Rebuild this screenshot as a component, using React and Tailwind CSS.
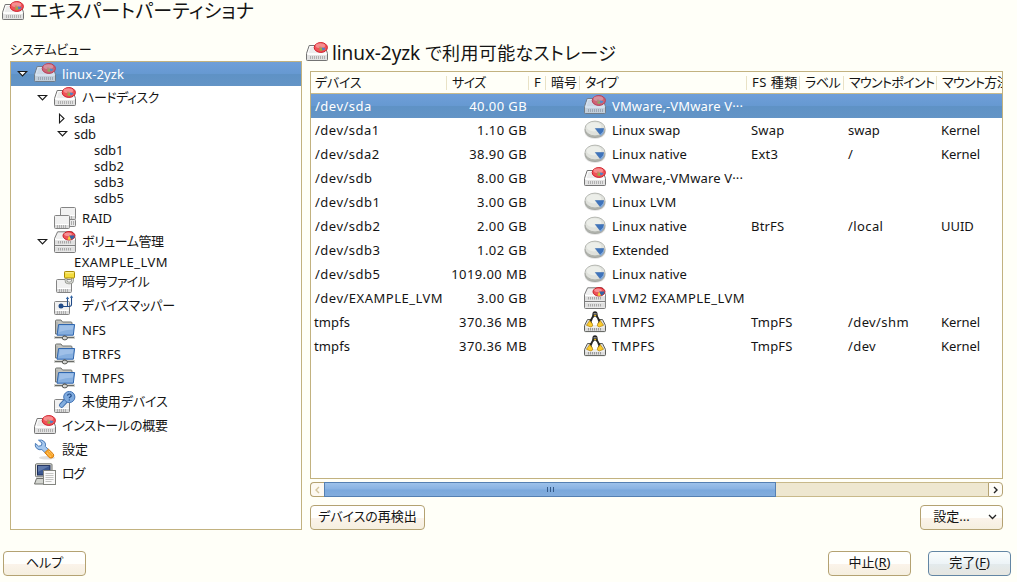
import clsx from "clsx";

/* ---------- icons (22 x 22) ---------- */

function Svg({ children, className }) {
  return (
    <svg width="22" height="22" viewBox="0 0 22 22" className={clsx("shrink-0", className)}>
      {children}
    </svg>
  );
}

function DiskIcon({ className }) {
  return (
    <Svg className={className}>
      <path d="M3.2 3.500h15.600l2.700 8v6.200q0 .8-.8.8H1.300q-.8 0-.8-.8v-6.200z" fill="#f4f4f4" stroke="#747474" />
      <path d="M4.200 4.500h13.600l2.200 7H2z" fill="#ececec" stroke="#fff" strokeWidth=".8" />
      <path d="M1 12.500h20V18H1z" fill="#e2e2e2" />
      <path d="M1.500 12.500h19" stroke="#fdfdfd" />
      <path d="M4.500 14v3M6.500 14v3M8.500 14v3M10.500 14v3M12.500 14v3M14.500 14v3M16.500 14v3M18.500 14v3" stroke="#b0b0b0" />
      <ellipse cx="14.800" cy="5.500" rx="6.600" ry="4.900" fill="#ef5358" stroke="#d01c28" />
      <ellipse cx="14.300" cy="3.700" rx="4.800" ry="2.400" fill="#f9a0a2" opacity=".75" />
      <path d="M15.500 5.200l4 1q-.6 2-3 2.400z" fill="#4f83c4" />
      <path d="M15.500 5.200l.8 3.500q-2 .2-3.300-.8z" fill="#8fb83c" />
      <path d="M12.800 4.600h2.400v1.800h-2.400z" fill="#c78a6a" />
    </Svg>
  );
}

function PartitionIcon() {
  return (
    <Svg>
      <ellipse cx="11" cy="13" rx="10.500" ry="7" fill="#000" opacity=".1" />
      <path d="M1 10v2q1.500 6.500 10 6.500T21 12v-2z" fill="#b2b5af" stroke="#9a9d97" strokeWidth=".8" />
      <ellipse cx="11" cy="9.500" rx="10" ry="7.400" fill="#dfe1dc" stroke="#a9aca6" strokeWidth=".8" />
      <ellipse cx="10" cy="7.800" rx="7.400" ry="4.600" fill="#eceee9" />
      <path d="M11.300 9.500h8.500q-.4 4-3.800 6z" fill="#3f74bc" stroke="#3165ad" strokeWidth=".5" />
      <path d="M16 15.500q3.300-1.900 3.800-5.200v3q-.9 2.200-3.200 3.600z" fill="#7ca6dc" />
    </Svg>
  );
}

function MiniDrive({ x, y, w, h }) {
  return (
    <g transform={`translate(${x} ${y})`}>
      <rect x=".5" y=".5" width={w - 1} height={h - 1} rx="1" fill="#f1f1f1" stroke="#848484" />
      <path d={`M1.5 ${h - 4.5}H${w - 1.5}`} stroke="#fff" />
      <rect x="1" y={h - 4} width={w - 2} height="3" fill="#dcdcdc" />
      <path d={`M3.5 ${h - 4}v3M5.5 ${h - 4}v3M7.5 ${h - 4}v3M9.5 ${h - 4}v3M11.5 ${h - 4}v3`} stroke="#adadad" />
    </g>
  );
}

function RaidIcon() {
  return (
    <Svg>
      <MiniDrive x={6} y={0} w={16} h={13} />
      <rect x="6.5" y="12.5" width="15" height="7" rx="1" fill="#e9e9e9" stroke="#848484" />
      <path d="M17.5 14v4M19.5 14v4" stroke="#adadad" />
      <MiniDrive x={0} y={8} w={16} h={14} />
    </Svg>
  );
}

function VolumeIcon() {
  return (
    <Svg>
      <path d="M3.600.8h14.800l3 6.700V20.600q0 .9-.9.9h-19q-1 0-1-.9V7.500z" fill="#f0f0f0" stroke="#7a7a7a" />
      <path d="M1 8.500h20" stroke="#fff" />
      <path d="M.8 14.500h20.400" stroke="#7f7f7f" />
      <path d="M1 9.400h20v4.100H1zM1 16h20v4.600H1z" fill="#dfdfdf" />
      <path d="M4.500 10v2.500M6.500 10v2.500M8.500 10v2.500M10.500 10v2.500M12.500 10v2.500M14.500 10v2.500M16.500 10v2.500M4.500 17v2.500M6.500 17v2.500M8.500 17v2.500M10.500 17v2.500M12.500 17v2.500M14.500 17v2.500M16.500 17v2.500" stroke="#a8a8a8" />
      <ellipse cx="15" cy="4.800" rx="6" ry="4.200" fill="#ee5359" stroke="#c41a24" />
      <ellipse cx="14" cy="3.300" rx="3.800" ry="1.800" fill="#f9a0a2" opacity=".8" />
      <path d="M15 4.500h5.600q-.3 3-3.600 4z" fill="#3465a4" />
      <path d="M15 4.500l2 4q-2 .6-3.500.2z" fill="#f2cf3c" />
    </Svg>
  );
}

function CryptIcon() {
  return (
    <Svg>
      <MiniDrive x={2} y={8} w={16} h={14} />
      <path d="M12 7v2.500q0 2.500 3.200 2.500t3.300-2.500V7" fill="none" stroke="#8a8c86" strokeWidth="2.600" />
      <path d="M12 7v2.500q0 2.500 3.200 2.500t3.300-2.500V7" fill="none" stroke="#d6d8d2" strokeWidth="1.200" />
      <rect x="10.500" y=".5" width="10" height="6.500" rx=".8" fill="#f4dc3e" stroke="#a88a08" />
      <path d="M11.500 1.800h8" stroke="#fdf6a8" />
    </Svg>
  );
}

function MapperIcon() {
  return (
    <Svg>
      <MiniDrive x={0} y={6} w={16} h={14} />
      <circle cx="7" cy="11" r="2.500" fill="#204a87" />
      <path d="M7 11.500h8.200q2.300 0 2.300-2.200V2M13.500 11.500V3" fill="none" stroke="#204a87" strokeWidth="1.100" />
      <path d="M11.800 4l1.700-2.500L15.200 4zM15.800 2.800l1.700-2.500 1.700 2.500z" fill="#3465a4" />
    </Svg>
  );
}

function NetFolderIcon() {
  return (
    <Svg>
      <path d="M1.500 15V2q0-1 1-1H7l1.500 2H17q1 0 1 1v11z" fill="#c3c4c0" stroke="#737571" />
      <path d="M3 3.500v10" stroke="#8f918d" strokeDasharray="1 1" />
      <path d="M4.600 5.500h16L19.300 16.200H3z" fill="#86afdf" stroke="#2f66ae" />
      <path d="M5.600 6.500h13.700l-.4 4q-7 .2-13.800 2.500z" fill="#a5c4ea" opacity=".8" />
      <path d="M0 18.500h21" stroke="#d0d1ce" strokeWidth="3" />
      <path d="M1 18.500h19" stroke="#6a6c68" />
      <path d="M10.500 16.500v1.500" stroke="#555" strokeWidth="2" />
      <ellipse cx="10.800" cy="19" rx="2.600" ry="1.900" fill="#d4d5d2" stroke="#555753" />
    </Svg>
  );
}

function UnusedIcon() {
  return (
    <Svg>
      <MiniDrive x={0} y={8} w={16} h={14} />
      <path d="M12 9.500l-4.500 4.800" stroke="#3c6cab" strokeWidth="5" strokeLinecap="round" />
      <path d="M12 9.500l-4.500 4.800" stroke="#84aede" strokeWidth="3.200" strokeLinecap="round" />
      <circle cx="15.300" cy="6" r="5.600" fill="#7fabdf" stroke="#4474b4" />
      <path d="M13.500 4.600q.2-1.600 1.900-1.600t1.800 1.500q0 1-1 1.500t-.9 1.300M15.300 8.400v1.200" fill="none" stroke="#204a87" strokeWidth="1.200" />
    </Svg>
  );
}

function WrenchIcon() {
  return (
    <Svg>
      <ellipse cx="13" cy="18.800" rx="8" ry="1.800" fill="#000" opacity=".13" />
      <path d="M4.500 1.200Q8 .2 10.500 2.800q1.700 2.300.8 4.600l4 4-3.200 3.300-4.200-4.100q-3 .8-5.300-1.300Q.6 7.200 1.400 4.400L4.600 7.200 7.400 6.600 8 4z" fill="#a6c8ee" stroke="#4a7bb8" />
      <path d="M10.800 13.600l3.700-3.400 4.900 4.800q.9 2.200-.6 3.400-1.700 1.200-3.600.2z" fill="#f9a72b" stroke="#d97a08" />
      <path d="M13 13.800l4.300 4.200M15 12l3.700 3.800" stroke="#fdd48c" strokeDasharray="1.200 1" />
    </Svg>
  );
}

function LogIcon() {
  return (
    <Svg>
      <path d="M2.500 15.500h12l2 5.500H.5z" fill="#d3d5d0" stroke="#6d6f6b" />
      <rect x="1.500" y=".8" width="16.500" height="13" rx="1" fill="#deded9" stroke="#6d6f6b" />
      <rect x="3.500" y="2.600" width="12.500" height="9.400" fill="#3c5891" stroke="#1d2f5c" />
      <path d="M4 3h11.500L4 9z" fill="#6079ab" />
      <rect x="9.500" y="7.500" width="12" height="14" fill="#fafafa" stroke="#83857f" />
      <path d="M11.500 10.500h8M11.500 12.500h8M11.500 14.500h8M11.500 16.500h8M11.500 18.500h6" stroke="#c4c5c2" />
    </Svg>
  );
}

function TuxIcon() {
  return (
    <Svg>
      <path d="M3.500 8.500h15l3 6v5.300q0 .8-1 .8h-19q-1 0-1-.8v-5.300z" fill="#dcdcdc" stroke="#5c5e5a" />
      <path d="M1.500 16h19" stroke="#fff" />
      <path d="M4.500 17v2.500M6.500 17v2.500M8.500 17v2.500M10.500 17v2.500M12.500 17v2.500M14.500 17v2.500M16.500 17v2.500" stroke="#999" />
      <path d="M11 .3q2.600 0 2.600 3 0 2 1.500 3.900 2.200 3 1.300 5.800H5.600q-.9-2.800 1.300-5.800Q8.400 5.300 8.400 3.300q0-3 2.600-3z" fill="#262626" />
      <path d="M11 5.200q2.700 1.500 3.200 5 0 4.300-3.200 4.300t-3.200-4.300q.5-3.500 3.200-5z" fill="#fff" />
      <circle cx="10.200" cy="2.800" r=".6" fill="#fff" />
      <circle cx="11.900" cy="2.800" r=".6" fill="#fff" />
      <path d="M9.700 3.900h2.800l-1.400 1.500z" fill="#f5c211" />
      <path d="M5.600 9.500l2.900 3.500q.9 2.600-1.700 3l-4.200-1.600q.3-1.700 1.600-2.400zM16.400 9.500l-2.900 3.500q-.9 2.600 1.700 3l4.200-1.600q-.3-1.700-1.600-2.400z" fill="#fbcb2c" stroke="#a97a05" strokeWidth=".6" />
    </Svg>
  );
}

function Expander({ open, light }) {
  return (
    <svg width="11" height="11" viewBox="0 0 11 11" className="shrink-0">
      <path
        d={open ? "M1.200 2.500h8.600L5.500 7z" : "M2.500 1.200v8.600L7 5.500z"}
        fill={light ? "#fff" : "#fdfdfd"}
        stroke="#1a1a1a"
        strokeWidth="1.100"
      />
    </svg>
  );
}

/* ---------- data ---------- */

const tree = [
  { pad: "pl-[6px]", text: "linux-2yzk", icon: DiskIcon, open: true, selected: true, track: "tracking-[0.1px]" },
  { pad: "pl-[26px]", text: "ハードディスク", icon: DiskIcon, open: true, track: "mb-[2px] tracking-[-0.5px]" },
  { pad: "pl-[46px]", text: "sda", open: false, track: "tracking-[-0.1px]" },
  { pad: "pl-[46px]", text: "sdb", open: true, track: "tracking-[-0.1px]" },
  { pad: "pl-[83px]", text: "sdb1", track: "tracking-[-0.1px]" },
  { pad: "pl-[83px]", text: "sdb2", track: "tracking-[0.1px]" },
  { pad: "pl-[83px]", text: "sdb3", track: "tracking-[0.1px]" },
  { pad: "pl-[83px]", text: "sdb5", track: "tracking-[0.1px]" },
  { pad: "pl-[43px]", text: "RAID", icon: RaidIcon, track: "tracking-[-0.1px]" },
  { pad: "pl-[26px]", text: "ボリューム管理", icon: VolumeIcon, open: true, track: "mb-[2px] tracking-[-0.45px]" },
  { pad: "pl-[63px]", text: "EXAMPLE_LVM", track: "tracking-[0.48px]" },
  { pad: "pl-[43px]", text: "暗号ファイル", icon: CryptIcon, track: "mb-[2px] tracking-[-0.67px]" },
  { pad: "pl-[43px]", text: "デバイスマッパー", icon: MapperIcon, track: "mb-[2px] tracking-[-0.09px]" },
  { pad: "pl-[43px]", text: "NFS", icon: NetFolderIcon, track: "tracking-[0.08px]" },
  { pad: "pl-[43px]", text: "BTRFS", icon: NetFolderIcon, track: "tracking-[0.3px]" },
  { pad: "pl-[43px]", text: "TMPFS", icon: NetFolderIcon, track: "tracking-[0.4px]" },
  { pad: "pl-[43px]", text: "未使用デバイス", icon: UnusedIcon, track: "mb-[2px] tracking-[-0.07px]" },
  { pad: "pl-[23px]", text: "インストールの概要", icon: DiskIcon, track: "mb-[2px] tracking-[-0.25px]" },
  { pad: "pl-[23px]", text: "設定", icon: WrenchIcon, track: "mb-[2px]" },
  { pad: "pl-[23px]", text: "ログ", icon: LogIcon, track: "mb-[2px] tracking-[-1.100px]" },
];

const columns = [
  { text: "デバイス", track: "tracking-[-0.2px]", pad: "pl-[4px]" },
  { text: "サイズ", track: "tracking-[-0.6px]", pad: "pl-[5px]" },
  { text: "F", track: "tracking-normal", pad: "pl-[5px]" },
  { text: "暗号", track: "tracking-normal", pad: "pl-[5px]" },
  { text: "タイプ", track: "tracking-[-0.59px]", pad: "pl-[5px]" },
  { text: "FS 種類", track: "tracking-[0.5px]", pad: "pl-[5px]" },
  { text: "ラベル", track: "tracking-[-0.4px]", pad: "pl-[5px]" },
  { text: "マウントポイント", track: "tracking-[-0.65px]", pad: "pl-[5px]" },
  { text: "マウント方法", track: "tracking-[-0.65px]", pad: "pl-[5px]" },
];

const rows = [
  { dev: "/dev/sda", size: "40.00 GB", icon: DiskIcon, type: "VMware,-VMware V···", tt: "tracking-[0.14px]", selected: true },
  { dev: "/dev/sda1", size: "1.10 GB", icon: PartitionIcon, type: "Linux swap", tt: "tracking-normal", fs: "Swap", mount: "swap", by: "Kernel" },
  { dev: "/dev/sda2", size: "38.90 GB", icon: PartitionIcon, type: "Linux native", tt: "tracking-[0.1px]", fs: "Ext3", mount: "/", by: "Kernel" },
  { dev: "/dev/sdb", size: "8.00 GB", icon: DiskIcon, type: "VMware,-VMware V···", tt: "tracking-[0.14px]" },
  { dev: "/dev/sdb1", size: "3.00 GB", icon: PartitionIcon, type: "Linux LVM", tt: "tracking-[0.2px]" },
  { dev: "/dev/sdb2", size: "2.00 GB", icon: PartitionIcon, type: "Linux native", tt: "tracking-[0.1px]", fs: "BtrFS", mount: "/local", by: "UUID" },
  { dev: "/dev/sdb3", size: "1.02 GB", icon: PartitionIcon, type: "Extended", tt: "tracking-[-0.06px]" },
  { dev: "/dev/sdb5", size: "1019.00 MB", icon: PartitionIcon, type: "Linux native", tt: "tracking-[0.1px]" },
  { dev: "/dev/EXAMPLE_LVM", size: "3.00 GB", icon: VolumeIcon, type: "LVM2 EXAMPLE_LVM", tt: "tracking-[0.45px]" },
  { dev: "tmpfs", size: "370.36 MB", icon: TuxIcon, type: "TMPFS", tt: "tracking-[0.44px]", fs: "TmpFS", mount: "/dev/shm", by: "Kernel" },
  { dev: "tmpfs", size: "370.36 MB", icon: TuxIcon, type: "TMPFS", tt: "tracking-[0.44px]", fs: "TmpFS", mount: "/dev", by: "Kernel" },
];

const selectedFill = "bg-[linear-gradient(#6f9fd9_0,#6699d1_50%,#5f92c5_52%,#6394c6_100%)] text-white";
const grid = "grid grid-cols-[136px_82px_17px_34px_167px_53px_44px_93px_1fr]";

/* ---------- parts ---------- */

function TreeRow({ item }) {
  const Icon = item.icon;
  return (
    <div className={clsx("flex shrink-0 items-center", item.pad, Icon ? "h-6" : "h-4", item.selected && selectedFill)}>
      {item.open !== undefined && (
        <span className="flex w-[17px] shrink-0">
          <Expander open={item.open} light={item.selected} />
        </span>
      )}
      {Icon && <Icon className={item.selected ? "opacity-75" : ""} />}
      <span className={clsx("whitespace-nowrap leading-4", Icon && "ml-[6px]", item.track)}>{item.text}</span>
    </div>
  );
}

function Row({ row }) {
  const Icon = row.icon;
  return (
    <div className={clsx(grid, "h-6 items-center whitespace-nowrap", row.selected && selectedFill)}>
      <span className={row.dev === "tmpfs" ? "pl-[3px] tracking-[0.1px]" : "pl-[4px] tracking-[0.5px]"}>{row.dev}</span>
      <span className="pr-[2px] text-right tracking-[0.4px]">{row.size}</span>
      <span />
      <span />
      <span className="flex items-center gap-[6px] pl-[4px]">
        <Icon className={row.selected ? "opacity-75" : ""} />
        <span className={row.tt}>{row.type}</span>
      </span>
      <span className="pl-[4px] tracking-[0.2px]">{row.fs}</span>
      <span />
      <span className={clsx("pl-[4px]", row.mount === "swap" ? "tracking-normal" : "tracking-[0.4px]")}>{row.mount}</span>
      <span className="pl-[4px] tracking-[-0.05px]">{row.by}</span>
    </div>
  );
}

function Button({ children, className, primary }) {
  return (
    <button
      className={clsx(
        "flex h-[25px] items-center justify-center whitespace-nowrap rounded-[4px] border pb-[3px]",
        primary
          ? "border-[#6386a4] bg-[linear-gradient(#fafdfd_0,#edf4f7_50%,#e3eaec_54%,#e6e6e0_100%)]"
          : "border-[#b4a272] bg-[linear-gradient(#ffffff_0,#fffffc_50%,#fbf3ea_54%,#f5efdf_100%)]",
        className
      )}
    >
      {children}
    </button>
  );
}

export default function App() {
  return (
    <div className="flex h-[582px] w-[1017px] flex-col overflow-hidden bg-[#fffff8] font-['Noto_Sans','Noto_Sans_CJK_JP',sans-serif] text-[13px] leading-4 text-[#141414] [font-feature-settings:'palt']">
      <header className="flex h-6 items-center pl-[2px]">
        <DiskIcon />
        <h1 className="mb-[2px] ml-[6px] whitespace-nowrap text-[19px] leading-6 tracking-[0.25px]">エキスパートパーティショナ</h1>
      </header>

      <main className="flex h-[506px] gap-[8px] pl-[10px] pr-[14px]">
        <section className="flex w-[292px] flex-col pt-[17px]">
          <h2 className="h-[20px] tracking-[-0.25px]">システムビュー</h2>
          <div className="flex h-[469px] flex-col border border-[#c2b280] bg-white">
            {tree.map((item, i) => (
              <TreeRow key={i} item={item} />
            ))}
          </div>
        </section>

        <section className="flex w-[693px] flex-col pt-[16px]">
          <div className="-ml-[4px] flex h-[31px] items-center pb-[4px]">
            <DiskIcon className="mb-px" />
            <h2 className="mb-[2px] ml-[4px] flex items-baseline gap-[5px] whitespace-nowrap leading-6">
              <span className="text-[19px] tracking-[-0.1px]">linux-2yzk</span>
              <span className="text-[18px] tracking-[0.35px]">で利用可能なストレージ</span>
            </h2>
          </div>

          <div className="h-[408px] overflow-hidden border border-[#c2b280] bg-white">
            <div className={clsx(grid, "h-[22px] items-center whitespace-nowrap border-b border-[#c9bb8c] bg-[#fffff8]")}>
              {columns.map((c, i) => (
                <span
                  key={c.text}
                  className={clsx(
                    "flex h-[14px] items-center border-[#e9e2c6] pb-[2px]",
                    i < columns.length - 1 && "border-r",
                    c.pad,
                    c.track
                  )}
                >
                  {c.text}
                </span>
              ))}
            </div>
            {rows.map((row, i) => (
              <Row key={i} row={row} />
            ))}
          </div>

          <div className="mt-[3px] flex h-[15px] shrink-0">
            <div className="flex w-[14px] items-center justify-center rounded-l-[4px] border border-r-0 border-[#b4a272] bg-[#fdf9f1]">
              <svg width="5" height="8" viewBox="0 0 5 8"><path d="M4 1L1 4l3 3" fill="none" stroke="#d3c49c" strokeWidth="1.400" /></svg>
            </div>
            <div className="flex w-[452px] items-center justify-center gap-[2px] border border-[#5580b2] bg-[linear-gradient(#9cc1ea_0,#88b2e2_48%,#7aa8dc_52%,#83addd_100%)]">
              <i className="h-[5px] w-px bg-[#345a88]" />
              <i className="h-[5px] w-px bg-[#345a88]" />
              <i className="h-[5px] w-px bg-[#345a88]" />
            </div>
            <div className="flex-1 border-y border-[#c8b98a] bg-[#eee7d0]" />
            <div className="flex w-[15px] items-center justify-center rounded-r-[4px] border border-[#b4a272] bg-[#fefcf7]">
              <svg width="5" height="8" viewBox="0 0 5 8"><path d="M1 1l3 3-3 3" fill="none" stroke="#222" strokeWidth="1.400" /></svg>
            </div>
          </div>

          <div className="mt-[8px] flex justify-between">
            <Button className="w-[115px]">デバイスの再検出</Button>
            <Button className="w-[83px] pl-[7px]">
              <span>設定...</span>
              <svg width="9" height="6" viewBox="0 0 9 6" className="ml-[18px] mt-[2px]"><path d="M1 1l3.500 3.500L8 1" fill="none" stroke="#222" strokeWidth="1.300" /></svg>
            </Button>
          </div>
        </section>
      </main>

      <footer className="mt-[21px] flex pl-[3px] pr-[6px]">
        <Button className="w-[83px]">ヘルプ</Button>
        <Button className="ml-auto w-[83px]">
          中止(<u className="underline-offset-2">R</u>)
        </Button>
        <Button primary className="ml-[17px] w-[83px]">
          完了(<u className="underline-offset-2">F</u>)
        </Button>
      </footer>
    </div>
  );
}
